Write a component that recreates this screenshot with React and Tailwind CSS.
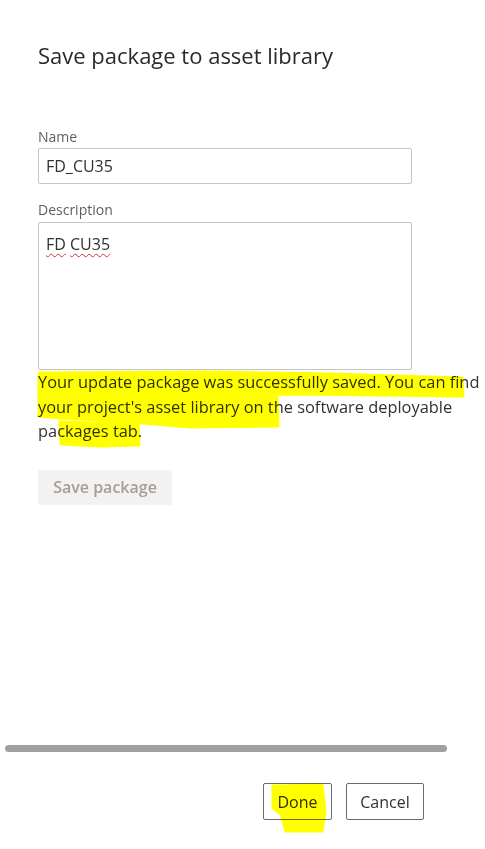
import React from "react";

export default function App() {
  return (
    <div className="relative w-[485px] h-[849px] bg-white flex flex-col font-['Open_Sans',sans-serif] text-[#323130] overflow-hidden">
      <div className="flex flex-col pl-[38px] pt-[40px]">
        <h1 className="text-[22px] leading-[30px] font-normal text-[#2b2a29]">
          Save package to asset library
        </h1>

        <label className="mt-[58px] text-[14px] leading-[18px] text-[#605e5c]">Name</label>
        <div className="mt-[2px] w-[374px] h-[36px] border border-[#c8c6c4] rounded-[2px] flex items-center pl-[7px] text-[16px] leading-[22px]">
          FD_CU35
        </div>

        <label className="mt-[17px] text-[14px] leading-[18px] text-[#605e5c]">Description</label>
        <div className="mt-[3px] w-[374px] h-[148px] border border-[#c8c6c4] rounded-[2px] pl-[7px] pt-[10px] text-[16px] leading-[22px]">
          <span className="underline decoration-wavy decoration-[#d13438] decoration-1 underline-offset-[3px]">FD</span>{" "}
          <span className="underline decoration-wavy decoration-[#d13438] decoration-1 underline-offset-[3px]">CU35</span>
        </div>

        <p className="w-[447px] text-[16.4px] leading-[24.5px] text-[#323130] whitespace-nowrap">
          Your update package was successfully saved. You can find
          <br />
          your project's asset library on the software deployable
          <br />
          packages tab.
        </p>

        <div className="mt-[26px] w-[134px] h-[35px] bg-[#f3f2f1] rounded-[2px] flex items-center justify-center text-[16px] font-semibold text-[#a19f9d]">
          Save package
        </div>
      </div>

      <div className="flex-1" />

      <div className="flex flex-col pb-[29px]">
        <div className="ml-[5px] w-[442px] h-[7px] rounded-full bg-[#a0a0a0]" />
        <div className="mt-[31px] flex justify-end gap-[14px] pr-[61px]">
          <div className="w-[69px] h-[37px] border border-[#6b6b6b] rounded-[2px] flex items-center justify-center text-[16px] font-normal text-[#323130]">
            Done
          </div>
          <div className="w-[78px] h-[37px] border border-[#6b6b6b] rounded-[2px] flex items-center justify-center text-[16px] font-normal text-[#323130]">
            Cancel
          </div>
        </div>
      </div>

      <svg
        className="absolute inset-0 pointer-events-none mix-blend-multiply"
        width="485"
        height="849"
        viewBox="0 0 485 849"
      >
        <g fill="#ffff00" stroke="#ffff00" strokeWidth="3" strokeLinejoin="round">
          <path d="M39,373 L200,372 L330,374 L462,378 L463,396 L300,394 L150,396 L39,396 Z" />
          <path d="M39,397 L200,396 L277,397 L278,426 L190,427 L120,421 L60,418 L39,416 Z" />
          <path d="M60,422 L138,424 L139,445 L100,446 L61,444 Z" />
          <path d="M273,786 L322,785 L325,812 L322,831 L286,831 L281,814 L273,808 Z" />
        </g>
      </svg>
    </div>
  );
}
